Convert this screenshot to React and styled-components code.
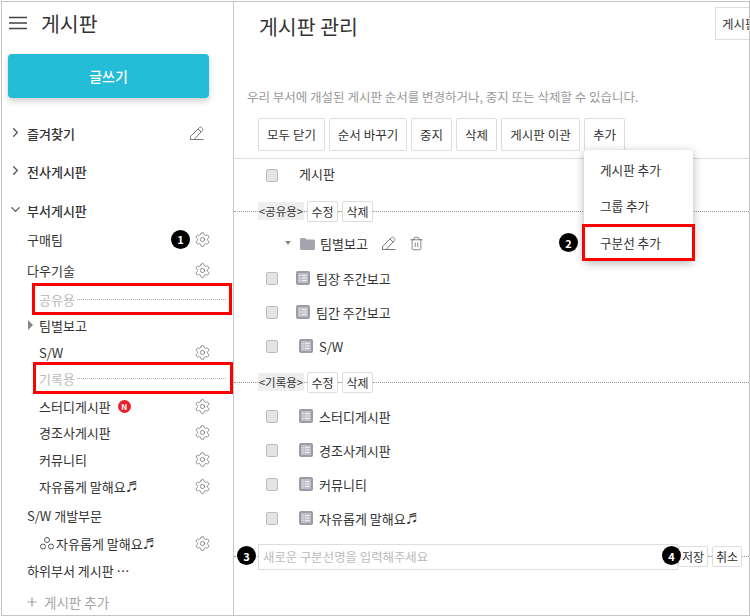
import { ChevronDown, ChevronRight, Plus, Settings, Trash2 } from "lucide-react";
import styled, { createGlobalStyle } from "styled-components";

const GlobalStyle = createGlobalStyle`
  html, body {
    margin: 0;
    padding: 0;
    background: #fff;
    overflow: hidden;
  }
  body {
    font-family: "Noto Sans CJK KR", "Noto Sans", sans-serif;
    color: #333;
  }
  * {
    box-sizing: border-box;
  }
`;

const Frame = styled.div`
  display: flex;
  width: 749px;
  height: 615px;
  margin: 1px 0 0 1px;
  border: 1px solid #c4c4c4;
  overflow: hidden;
`;

/* 왼쪽 사이드바 */
const Sidebar = styled.aside`
  width: 232px;
  flex-shrink: 0;
  border-right: 1px solid #c8c8c8;
`;

const SideHeader = styled.div`
  display: flex;
  align-items: center;
  gap: 13px;
  height: 42px;
  padding-left: 6px;
`;

const SideTitle = styled.h1`
  margin: 0;
  font-size: 20.5px;
  font-weight: 400;
  color: #333;
`;

const WriteButton = styled.button`
  display: block;
  width: 201px;
  height: 44px;
  margin: 10px 0 22px 6px;
  border: 0;
  border-radius: 4px;
  background: #25bcd8;
  box-shadow: 0 3px 6px rgba(0, 0, 0, 0.2);
  color: #fff;
  font: 500 14px "Noto Sans CJK KR", sans-serif;
`;

const NavRow = styled.div`
  position: relative;
  display: flex;
  align-items: center;
  height: 26px;
  margin-top: ${({ $top }) => $top || 0}px;
  padding: 0 22px 0 ${({ $indent }) => $indent || 25}px;
  font-size: 13px;
  font-weight: ${({ $strong }) => ($strong ? 500 : 400)};
  color: #333;
  white-space: nowrap;

  &::after {
    content: "";
    display: ${({ $boxLeft }) => ($boxLeft ? "block" : "none")};
    position: absolute;
    inset: -3px ${({ $boxLeft }) => 31 - $boxLeft}px -3px ${({ $boxLeft }) => $boxLeft}px;
    border: 3px solid #f00;
    pointer-events: none;
  }
`;

const NavCaret = styled.span`
  position: absolute;
  left: 6px;
  top: 5px;
  display: flex;
  color: #555;
`;

const Triangle = styled.span`
  position: absolute;
  left: 26px;
  top: 8px;
  width: 0;
  height: 0;
  border-left: 5px solid #888;
  border-top: 5px solid transparent;
  border-bottom: 5px solid transparent;
`;

const NavTools = styled.span`
  display: flex;
  align-items: center;
  gap: 4px;
  margin-left: auto;
`;

const PencilSlot = styled.span`
  display: flex;
  margin-right: 6px;
`;

const NavDivider = styled.span`
  flex: 1;
  margin: 0 -15px 0 2px;
  border-top: 1px dotted #aaa;
`;

const DividerName = styled.span`
  color: #bbb;
`;

const NewMark = styled.span`
  display: inline-flex;
  align-items: center;
  justify-content: center;
  width: 13px;
  height: 13px;
  margin-left: 7px;
  border-radius: 50%;
  background: #e8212e;
  color: #fff;
  font-size: 8px;
  font-weight: 700;
`;

const AddBoard = styled.div`
  display: flex;
  align-items: center;
  gap: 5px;
  height: 26px;
  margin-top: 6px;
  padding-left: 23px;
  font-size: 13.5px;
  color: #a5a5a5;
`;

const Note = styled.span`
  font-size: 11px;
  margin-left: 1px;
`;

/* 번호 표시 */
const Badge = styled.span`
  display: inline-flex;
  align-items: center;
  justify-content: center;
  width: 19px;
  height: 19px;
  border-radius: 50%;
  background: #000;
  color: #fff;
  font-size: 11px;
  font-weight: 700;
  flex-shrink: 0;
`;

const FloatBadge = styled(Badge)`
  position: absolute;
  left: ${({ $left }) => $left}px;
  top: ${({ $y }) => $y}px;
  z-index: 3;
`;

/* 오른쪽 본문 */
const Main = styled.main`
  position: relative;
  flex: 1;
  min-width: 0;
  overflow: hidden;
`;

const TitleBar = styled.div`
  display: flex;
  justify-content: space-between;
  height: 48px;
  padding: 5px 0 0 25px;
`;

const PageTitle = styled.h2`
  margin: 4px 0 0;
  font-size: 20.5px;
  font-weight: 400;
  color: #333;
`;

const CutButton = styled.button`
  flex-shrink: 0;
  width: 66px;
  height: 33px;
  margin-right: -32px;
  padding: 0 0 0 6px;
  border: 1px solid #ddd;
  background: #fff;
  color: #333;
  text-align: left;
  white-space: nowrap;
  font: 12.5px "Noto Sans CJK KR", sans-serif;
`;

const Description = styled.p`
  margin: 38px 0 0;
  padding-left: 13px;
  font-size: 12.5px;
  line-height: 18px;
  color: #999;
  white-space: nowrap;
`;

const Toolbar = styled.div`
  display: flex;
  gap: 4px;
  height: 41px;
  margin-top: 12px;
  padding-left: 24px;
  border-bottom: 1px solid #ddd;
`;

const ToolButton = styled.button`
  width: ${({ $w }) => $w}px;
  height: 33px;
  padding: 0;
  border: 1px solid #ddd;
  border-radius: 2px;
  background: #fff;
  color: #333;
  font: 12.5px "Noto Sans CJK KR", sans-serif;
`;

const BoardRow = styled.div`
  display: flex;
  align-items: center;
  height: ${({ $h }) => $h || 34}px;
  margin-top: ${({ $top }) => $top || 0}px;
  padding-left: 32px;
  font-size: 13px;
  color: #333;
`;

const HeadLabel = styled.span`
  margin-top: -4px;
`;

const Check = styled.input.attrs({ type: "checkbox" })`
  appearance: none;
  width: 12px;
  height: 13px;
  margin: 0 ${({ $after }) => $after}px 0 0;
  border: 1px solid #bbb;
  border-radius: 2px;
  background: #e4e4e4;
  flex-shrink: 0;
`;

const IconGap = styled.span`
  display: flex;
  margin-right: 6px;
`;

const FolderRow = styled(BoardRow)`
  padding-left: 51px;
  gap: 5px;
`;

const FolderCaret = styled.span`
  width: 0;
  height: 0;
  margin-right: 4px;
  border-top: 4px solid #888;
  border-left: 3px solid transparent;
  border-right: 3px solid transparent;
`;

const FolderTools = styled.span`
  display: flex;
  align-items: center;
  gap: 12px;
  margin-left: 8px;
`;

const DividerRow = styled.div`
  display: flex;
  align-items: center;
  height: 24px;
  margin-top: ${({ $top }) => $top || 0}px;
`;

const Dots = styled.span`
  flex: ${({ $w }) => ($w ? `0 0 ${$w}px` : 1)};
  border-top: 1px dotted #999;
`;

const GroupName = styled.span`
  display: flex;
  align-items: center;
  justify-content: center;
  width: 46px;
  height: 18px;
  background: #eee;
  font-size: 11.5px;
  white-space: nowrap;
  color: #333;
`;

const SmallButton = styled.button`
  width: ${({ $w }) => $w || 31}px;
  height: 21px;
  padding: 0;
  border: 1px solid #ddd;
  border-radius: 2px;
  background: #fff;
  color: #333;
  font: 12px "Noto Sans CJK KR", sans-serif;
`;

const InputRow = styled(DividerRow)`
  height: 27px;
`;

const NameInput = styled.input`
  width: 420px;
  height: 26px;
  padding: 0 4px;
  border: 1px solid #ddd;
  outline: 0;
  font: 12.4px "Noto Sans CJK KR", sans-serif;
  color: #333;

  &::placeholder {
    color: #bbb;
  }
`;

const AddMenu = styled.div`
  position: absolute;
  left: 350px;
  top: 148px;
  z-index: 2;
  width: 109px;
  padding: 1px 0 0;
  border-radius: 3px;
  background: #fff;
  box-shadow: 0 2px 10px rgba(0, 0, 0, 0.3);
`;

const MenuItem = styled.div`
  position: relative;
  display: flex;
  align-items: center;
  height: 36.5px;
  padding-left: 16px;
  font-size: 12.6px;
  color: #333;

  &::after {
    content: "";
    display: ${({ $marked }) => ($marked ? "block" : "none")};
    position: absolute;
    inset: 0 -2px 0 -2px;
    border: 3px solid #f00;
  }
`;

const MenuBadge = styled(Badge)`
  position: absolute;
  left: -25px;
  top: 9px;
`;

const Hamburger = () => (
  <svg width="20" height="14" viewBox="0 0 20 14" fill="none" stroke="#444" strokeWidth="1.5">
    <path d="M1 1.5h18M1 7h18M1 12.5h18" />
  </svg>
);

const PencilIcon = ({ size = 16 }) => (
  <svg width={size} height={size} viewBox="0 0 16 16" fill="none" stroke="#777" strokeWidth="1">
    <path d="M1.5 11.5 10.500 2.500a1.400 1.400 0 0 1 2 0l1 1a1.400 1.400 0 0 1 0 2L5 14.500H1.500zM9 4l3 3M1.500 14.500h13" />
  </svg>
);

const Gear = () => <Settings size={17} strokeWidth={1} color="#666" />;

const BoardIcon = () => (
  <svg width="14" height="14" viewBox="0 0 14 14">
    <rect width="14" height="14" rx="2" fill="#9a9ba6" />
    <rect x="2" y="2" width="10" height="10" fill="#c0c1c8" />
    <path d="M3.500 4.500h1M6 4.500h4.500M3.500 7h1M6 7h4.500M3.500 9.500h1M6 9.500h4.500" stroke="#f2f2f2" strokeWidth="1" />
  </svg>
);

const FolderIcon = () => (
  <svg width="15" height="13" viewBox="0 0 15 13">
    <path d="M0 2.500A1.500 1.500 0 0 1 1.500 1H5l1.500 1.500h7A1.500 1.500 0 0 1 15 4v7.500a1.500 1.500 0 0 1-1.500 1.500h-12A1.500 1.500 0 0 1 0 11.500z" fill="#a3a4ae" />
  </svg>
);

const GroupIcon = () => (
  <svg width="14" height="14" viewBox="0 0 14 14" fill="none" stroke="#555" strokeWidth="1" style={{ marginRight: 2 }}>
    <circle cx="7" cy="4" r="2.500" />
    <circle cx="3" cy="10.500" r="2.500" />
    <circle cx="11" cy="10.500" r="2.500" />
  </svg>
);

const navRows = [
  { id: "fav", label: "즐겨찾기", strong: true, caret: "right", pencil: true },
  { id: "all", label: "전사게시판", strong: true, caret: "right", top: 12 },
  { id: "dept", label: "부서게시판", strong: true, caret: "down", top: 13 },
  { id: "buy", label: "구매팀", top: 3, gear: true, badge: 1 },
  { id: "daou", label: "다우기술", top: 5, gear: true },
  { id: "share", divider: "공유용", top: 3, boxLeft: 30 },
  { id: "team", label: "팀별보고", indent: 37, triangle: true },
  { id: "sw", label: "S/W", indent: 37, top: 1, gear: true },
  { id: "log", divider: "기록용", boxLeft: 31 },
  { id: "study", label: "스터디게시판", indent: 37, top: 2, gear: true, fresh: true },
  { id: "event", label: "경조사게시판", indent: 37, gear: true },
  { id: "comm", label: "커뮤니티", indent: 37, top: 1, gear: true },
  { id: "free", label: "자유롭게 말해요", indent: 37, top: 1, gear: true, note: true },
  { id: "dev", label: "S/W 개발부문", top: 3 },
  { id: "free2", label: "자유롭게 말해요", indent: 38, top: 2, gear: true, note: true, group: true },
  { id: "sub", label: "하위부서 게시판 ⋯", top: 1 },
];

const topButtons = [
  { label: "모두 닫기", w: 67 },
  { label: "순서 바꾸기", w: 78 },
  { label: "중지", w: 41 },
  { label: "삭제", w: 41 },
  { label: "게시판 이관", w: 79 },
  { label: "추가", w: 41 },
];

const DividerBlock = ({ name, top }) => (
  <DividerRow $top={top}>
    <Dots $w={24} />
    <GroupName>{name}</GroupName>
    <Dots $w={3} />
    <SmallButton>수정</SmallButton>
    <Dots $w={4} />
    <SmallButton>삭제</SmallButton>
    <Dots />
  </DividerRow>
);

const Board = ({ label, after = 21, note, top }) => (
  <BoardRow $top={top}>
    <Check $after={after} />
    <IconGap>
      <BoardIcon />
    </IconGap>
    {label}
    {note && <Note>♬</Note>}
  </BoardRow>
);

const App = () => {
  return (
    <>
      <GlobalStyle />
      <Frame>
        <Sidebar>
          <SideHeader>
            <Hamburger />
            <SideTitle>게시판</SideTitle>
          </SideHeader>
          <WriteButton>글쓰기</WriteButton>
          {navRows.map((row) =>
            row.divider ? (
              <NavRow key={row.id} $indent={37} $top={row.top} $boxLeft={row.boxLeft}>
                <DividerName>{row.divider}</DividerName>
                <NavDivider />
              </NavRow>
            ) : (
              <NavRow key={row.id} $indent={row.indent} $top={row.top} $strong={row.strong}>
                {row.caret && (
                  <NavCaret>
                    {row.caret === "right" ? (
                      <ChevronRight size={15} strokeWidth={2} />
                    ) : (
                      <ChevronDown size={15} strokeWidth={2} />
                    )}
                  </NavCaret>
                )}
                {row.triangle && <Triangle />}
                {row.group && <GroupIcon />}
                {row.label}
                {row.note && <Note>♬</Note>}
                {row.fresh && <NewMark>N</NewMark>}
                {(row.gear || row.pencil) && (
                  <NavTools>
                    {row.badge && <Badge>{row.badge}</Badge>}
                    {row.gear && <Gear />}
                    {row.pencil && (
                      <PencilSlot>
                        <PencilIcon />
                      </PencilSlot>
                    )}
                  </NavTools>
                )}
              </NavRow>
            )
          )}
          <AddBoard>
            <Plus size={14} strokeWidth={2} color="#999" />
            게시판 추가
          </AddBoard>
        </Sidebar>

        <Main>
          <TitleBar>
            <PageTitle>게시판 관리</PageTitle>
            <CutButton>게시판</CutButton>
          </TitleBar>
          <Description>
            우리 부서에 개설된 게시판 순서를 변경하거나, 중지 또는 삭제할 수 있습니다.
          </Description>
          <Toolbar>
            {topButtons.map((button) => (
              <ToolButton key={button.label} $w={button.w}>
                {button.label}
              </ToolButton>
            ))}
          </Toolbar>

          <BoardRow $h={33}>
            <Check $after={21} />
            <HeadLabel>게시판</HeadLabel>
          </BoardRow>

          <DividerBlock name="<공유용>" top={7} />

          <FolderRow $top={3}>
            <FolderCaret />
            <FolderIcon />
            팀별보고
            <FolderTools>
              <PencilIcon />
              <Trash2 size={15} strokeWidth={1} color="#444" />
            </FolderTools>
          </FolderRow>

          <Board label="팀장 주간보고" after={18} top={1} />
          <Board label="팀간 주간보고" after={18} />
          <Board label="S/W" after={21} />

          <DividerBlock name="<기록용>" top={7} />

          <Board label="스터디게시판" top={5} />
          <Board label="경조사게시판" />
          <Board label="커뮤니티" />
          <Board label="자유롭게 말해요" note />

          <InputRow $top={8}>
            <Dots $w={24} />
            <NameInput placeholder="새로운 구분선명을 입력해주세요" />
            <SmallButton $w={30}>저장</SmallButton>
            <Dots $w={4} />
            <SmallButton $w={30}>취소</SmallButton>
            <Dots />
          </InputRow>

          <FloatBadge $left={3} $y={544}>3</FloatBadge>
          <FloatBadge $left={428} $y={544}>4</FloatBadge>

          <AddMenu>
            <MenuItem>게시판 추가</MenuItem>
            <MenuItem>그룹 추가</MenuItem>
            <MenuItem $marked>
              구분선 추가
              <MenuBadge>2</MenuBadge>
            </MenuItem>
          </AddMenu>
        </Main>
      </Frame>
    </>
  );
};

export default App;
